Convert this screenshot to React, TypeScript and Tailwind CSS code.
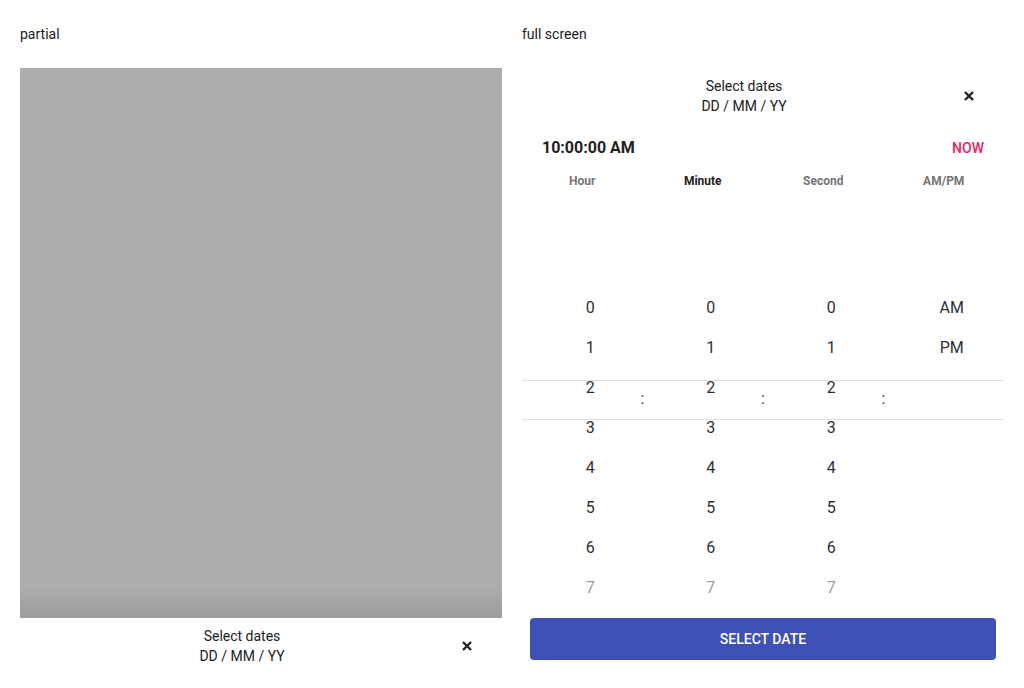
import React from "react";

const CloseIcon = () => (
  <svg width="12" height="12" viewBox="0 0 12 12" className="block">
    <path d="M2 2 L10 10 M10 2 L2 10" stroke="#212121" strokeWidth="2.4" />
  </svg>
);

const rows = [0, 1, 2, 3, 4, 5, 6, 7];

function Wheel({ items, colon }: { items: string[]; colon?: boolean }) {
  return (
    <div className="relative flex flex-col pl-4 pt-[88px]">
      {items.map((v, i) => (
        <div
          key={v}
          className={`h-10 flex items-center justify-center text-base ${i === 7 ? "text-[#9e9e9e]" : "text-[#303030]"}`}
        >
          {v}
        </div>
      ))}
      {colon && (
        <div className="absolute right-0 top-[189px] w-0 flex justify-center text-base text-[#424242]">
          <span className="leading-5">:</span>
        </div>
      )}
    </div>
  );
}

function Header() {
  return (
    <div className="relative h-14 pt-2 pr-[38px] flex flex-col items-center text-sm leading-5 text-[#212121]">
      <span>Select dates</span>
      <span>DD / MM / YY</span>
      <div className="absolute right-[29px] top-[22px]"><CloseIcon /></div>
    </div>
  );
}

export default function App() {
  const nums = rows.map(String);
  return (
    <div className="w-[1024px] h-[688px] overflow-hidden bg-white flex gap-5 px-5 pt-6" style={{ fontFamily: "Roboto, 'Noto Sans', sans-serif" }}>
      {/* Partial */}
      <div className="w-[482px] flex flex-col">
        <div className="text-sm leading-5 text-[#212121]">partial</div>
        <div className="mt-6 h-[550px] bg-[#adadad] flex flex-col justify-end">
          <div className="h-8 bg-gradient-to-b from-transparent to-black/10" />
        </div>
        <Header />
      </div>

      {/* Full screen */}
      <div className="w-[482px] flex flex-col">
        <div className="text-sm leading-5 text-[#212121]">full screen</div>
        <div className="mt-6">
          <Header />
        </div>
        <div className="mt-3 flex items-center justify-between px-5 h-6">
          <span className="text-base font-bold text-[#212121]">10:00:00 AM</span>
          <span className="text-sm font-medium text-[#e91e63]">NOW</span>
        </div>
        <div className="mt-3 grid grid-cols-4 text-xs font-bold leading-[18px]">
          <div className="text-center text-[#757575]">Hour</div>
          <div className="text-center text-[#212121]">Minute</div>
          <div className="text-center text-[#757575]">Second</div>
          <div className="text-center text-[#757575]">AM/PM</div>
        </div>
        <div className="relative mt-[10px] h-[418px] overflow-hidden">
          <div className="grid grid-cols-4">
            <Wheel items={nums} colon />
            <Wheel items={nums} colon />
            <Wheel items={nums} colon />
            <Wheel items={["AM", "PM"]} />
          </div>
          <div className="absolute left-0 right-0 top-[180px] h-[40px] border-y border-[#e0e0e0] pointer-events-none" />
        </div>
        <div className="mx-2 h-[42px] rounded bg-[#3f51b5] flex items-center justify-center text-sm font-medium text-white">
          SELECT DATE
        </div>
      </div>
    </div>
  );
}
